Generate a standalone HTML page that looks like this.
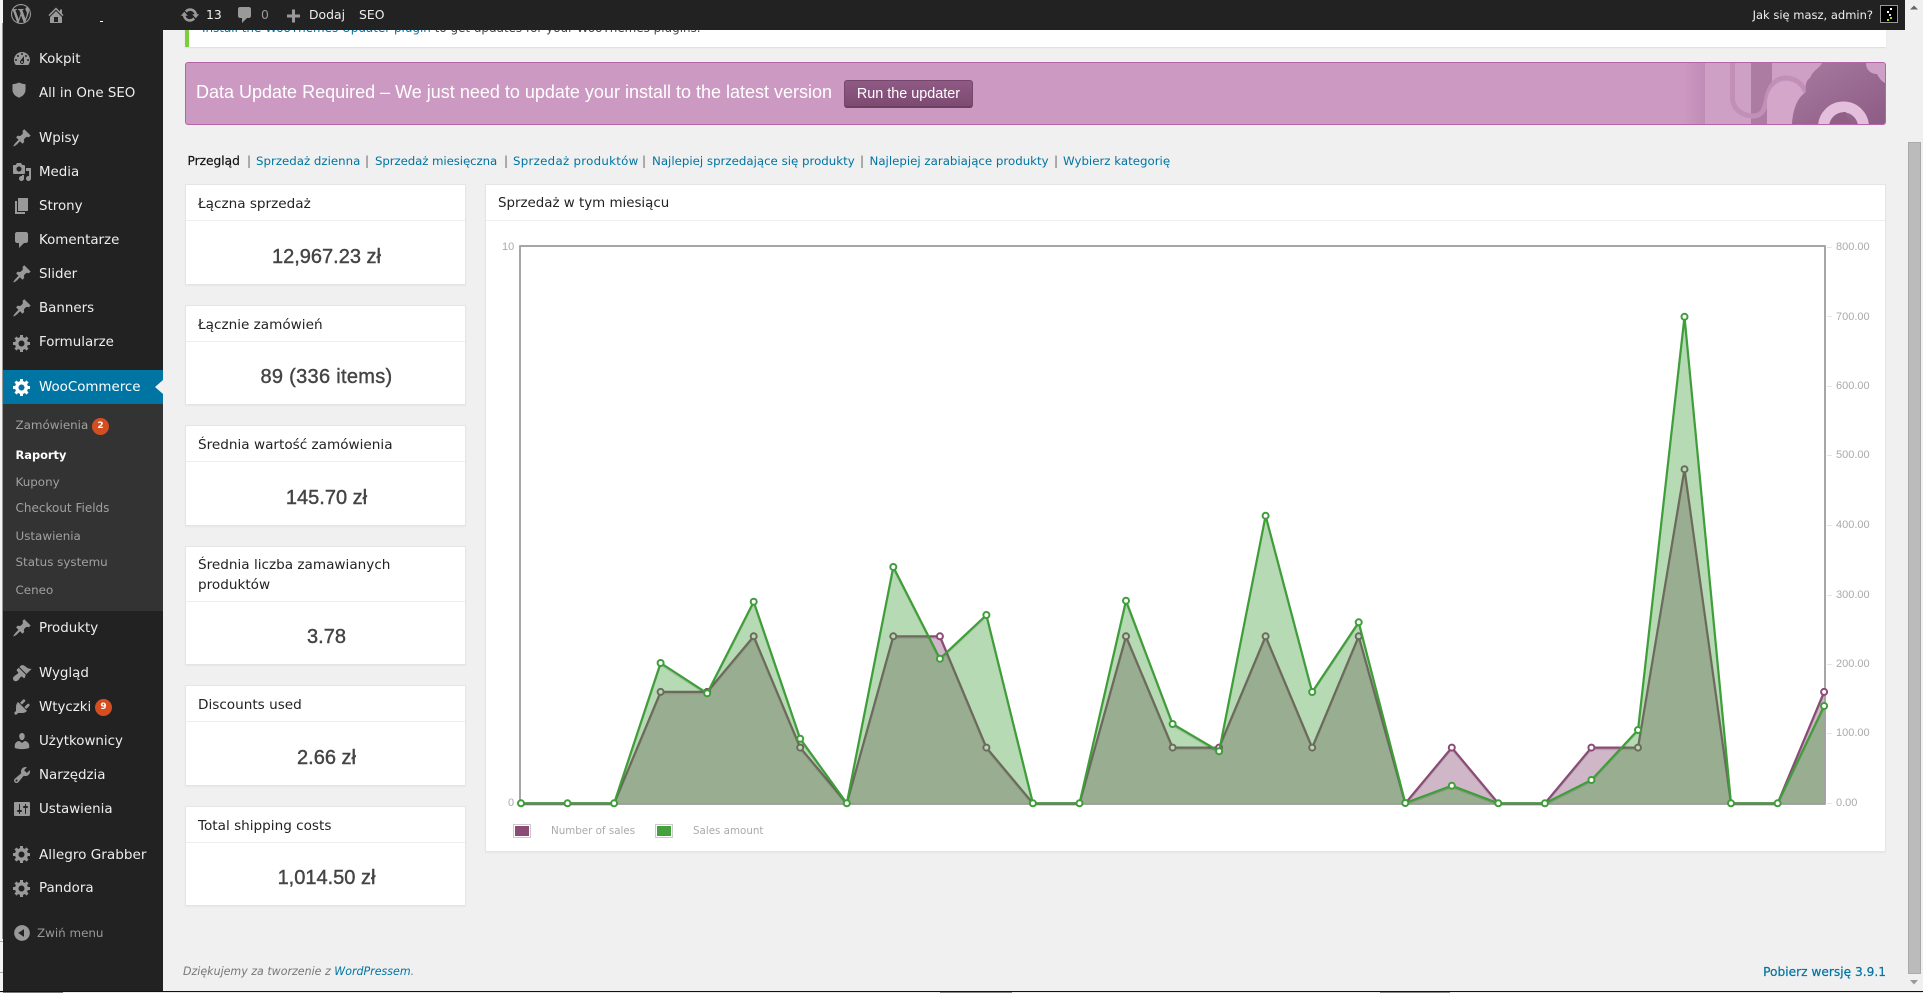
<!DOCTYPE html>
<html lang="pl"><head><meta charset="utf-8"><title>Raporty</title>
<style>
*{box-sizing:border-box}
html,body{margin:0;padding:0;width:1923px;height:993px;overflow:hidden;background:#f0f0f0;font-family:"DejaVu Sans","Liberation Sans",sans-serif}
.a{position:absolute;white-space:nowrap}
#left{left:0;top:0;width:3px;height:993px;background:#f4f4f4}
#leftl{left:2px;top:23px;width:1px;height:916px;background:#999}
#side{left:3px;top:30px;width:160px;height:961px;background:#222}
#sub{left:3px;top:404px;width:160px;height:207px;background:#333}
#cur{left:3px;top:370px;width:160px;height:34px;background:#0074a2}
#arrow{left:155px;top:380px;width:0;height:0;border-top:7px solid transparent;border-bottom:7px solid transparent;border-right:8px solid #f1f1f1}
#bar{left:3px;top:0;width:1902px;height:30px;background:#222}
.m{left:39px;line-height:20px;height:20px;font-size:13.4px;color:#eee}
.s{left:15.5px;line-height:18px;height:18px;font-size:11.9px;color:#a0a0a0}
.i{width:20px;height:20px;fill:#999;left:11.5px}
.b{width:17px;height:17px;border-radius:50%;background:#d54e21;color:#fff;font:bold 9px/17px "DejaVu Sans",sans-serif;text-align:center}
.t{line-height:20px;height:20px;font-size:12.4px;color:#eee}
.c{left:185px;width:281px;background:#fff;border:1px solid #e5e5e5;box-shadow:0 1px 1px rgba(0,0,0,.04)}
.l{left:186px;width:279px;height:1px;background:#eee}
.h{left:198px;line-height:20px;height:20px;font-size:13.6px;color:#222}
.v{left:187px;width:279px;text-align:center;line-height:28px;height:28px;font:20px/28px "Liberation Sans",sans-serif;color:#444;-webkit-text-stroke:.4px #444}
.n{top:152px;line-height:18px;height:18px;font-size:11.8px;color:#0074a2}
.sep{top:152px;line-height:18px;height:18px;font-size:12px;color:#666}
.r{font:11px/14px "Liberation Sans",sans-serif;color:#aaa}
.tk{left:1827px;width:5px;height:1px;background:#e6e6e6}
</style></head><body>
<div class="a" id="left"></div><div class="a" id="leftl"></div>
<div class="a" style="left:0;top:941px;width:3px;height:1px;background:#aaa"></div>
<div class="a" style="left:0;top:972px;width:3px;height:1px;background:#aaa"></div>

<!-- main notice -->
<div class="a" style="left:185px;top:20px;width:1701px;height:27px;background:#fff;border-left:4px solid #7ad03a;box-shadow:0 1px 1px rgba(0,0,0,.08)"></div>
<div class="a" style="left:202px;top:20px;line-height:17px;font-size:11.95px;color:#444"><span style="color:#0074a2">Install the WooThemes Updater plugin</span> to get updates for your WooThemes plugins.</div>

<!-- banner -->
<div class="a" style="left:185px;top:62px;width:1701px;height:63px;background:#cc99c2;border:1px solid #b763a8;border-radius:3px;overflow:hidden">
<svg class="a" style="left:0;top:0" width="1699" height="61" viewBox="186 63 1699 61">
<defs><linearGradient id="g1" x1="0" x2="1" y1="0" y2="0"><stop offset="0" stop-color="#cc99c2"/><stop offset="1" stop-color="#bf8cb5"/></linearGradient>
<linearGradient id="g2" x1="0" x2="1" y1="0" y2="1"><stop offset="0" stop-color="#a87aa1"/><stop offset="1" stop-color="#8d5c84"/></linearGradient></defs>
<rect x="1683" y="63" width="22" height="61" fill="url(#g1)"/>
<rect x="1705" y="63" width="180" height="61" fill="#cfa0c6"/>
<rect x="1751" y="63" width="21" height="61" fill="#ad7ca3"/>
<path d="M1732.500 63V98C1732.500 110 1744 116 1753 116C1763 116 1765 108 1767 98C1769 86 1776 78 1786 78C1796 78 1802 84 1806 92" fill="none" stroke="#c28fb8" stroke-width="5"/>
<path d="M1767 124V100C1769 88 1776 81 1786 81C1797 81 1802 88 1804 96V124Z" fill="#d3a6ca"/>
<path d="M1792 124C1793 108 1798 97 1806 92C1805 86 1806 80 1810 78C1813 70 1820 68 1822 63H1885V124Z" fill="url(#g2)"/>
<path d="M1866 63C1866 70 1871 74 1877 74C1880 80 1883 82 1885 83V63Z" fill="#cfa0c6"/>
<circle cx="1843.500" cy="127" r="20" fill="none" stroke="#e3bfdc" stroke-width="11"/>
<path d="M1830 124C1832 114 1840 112 1846 112C1845 116 1848 120 1852 124Z" fill="#8f5f86"/>
</svg>
</div>
<div class="a" style="left:196px;top:82px;font:18px/20px 'Liberation Sans',sans-serif;color:#fff">Data Update Required – We just need to update your install to the latest version</div>
<div class="a" style="left:844px;top:80px;width:129px;height:28px;border-radius:3px;background:linear-gradient(#8f5a85,#7d4a72);border:1px solid #76476c;border-bottom:2px solid #6a3f61;color:#fff;text-align:center;font:14.4px/26px 'Liberation Sans',sans-serif">Run the updater</div>

<!-- nav -->
<div class="a n" style="left:187.5px;color:#111;font-size:12.2px;-webkit-text-stroke:.2px #111">Przegląd</div>
<div class="a sep" style="left:247px">|</div><div class="a n" style="left:256px">Sprzedaż dzienna</div>
<div class="a sep" style="left:365px">|</div><div class="a n" style="left:375px;letter-spacing:-.1px">Sprzedaż miesięczna</div>
<div class="a sep" style="left:504px">|</div><div class="a n" style="left:513px;letter-spacing:.28px">Sprzedaż produktów</div>
<div class="a sep" style="left:642px">|</div><div class="a n" style="left:652px">Najlepiej sprzedające się produkty</div>
<div class="a sep" style="left:860px">|</div><div class="a n" style="left:869.500px">Najlepiej zarabiające produkty</div>
<div class="a sep" style="left:1054px">|</div><div class="a n" style="left:1063px">Wybierz kategorię</div>

<!-- cards -->
<div class="a c" style="top:184px;height:101px"></div><div class="a l" style="top:220px"></div>
<div class="a h" style="top:194px">Łączna sprzedaż</div><div class="a v" style="top:243px">12,967.23 zł</div>
<div class="a c" style="top:305px;height:100px"></div><div class="a l" style="top:341px"></div>
<div class="a h" style="top:315px">Łącznie zamówień</div><div class="a v" style="top:363px;letter-spacing:.3px">89 (336 items)</div>
<div class="a c" style="top:425px;height:101px"></div><div class="a l" style="top:461px"></div>
<div class="a h" style="top:435px">Średnia wartość zamówienia</div><div class="a v" style="top:484px">145.70 zł</div>
<div class="a c" style="top:546px;height:119px"></div><div class="a l" style="top:601px"></div>
<div class="a h" style="top:555px">Średnia liczba zamawianych</div><div class="a h" style="top:575px">produktów</div><div class="a v" style="top:623px">3.78</div>
<div class="a c" style="top:685px;height:101px"></div><div class="a l" style="top:721px"></div>
<div class="a h" style="top:695px">Discounts used</div><div class="a v" style="top:744px">2.66 zł</div>
<div class="a c" style="top:806px;height:100px"></div><div class="a l" style="top:842px"></div>
<div class="a h" style="top:816px">Total shipping costs</div><div class="a v" style="top:864px">1,014.50 zł</div>

<!-- chart card -->
<div class="a" style="left:485px;top:184px;width:1401px;height:668px;background:#fff;border:1px solid #e5e5e5;box-shadow:0 1px 1px rgba(0,0,0,.04)"></div>
<div class="a" style="left:486px;top:220px;width:1399px;height:1px;background:#eee"></div>
<div class="a h" style="left:498px;top:194px;font-size:13.4px">Sprzedaż w tym miesiącu</div>

<svg class="a" style="left:0;top:0" width="1923" height="993" viewBox="0 0 1923 993">
<g fill="none" stroke-linejoin="round">
<rect x="520" y="246" width="1305" height="558" stroke="#a6a6a6" stroke-width="2"/>
<!-- purple -->
<path fill="rgba(138,75,117,.4)" d="M521 803.300L567.500 803.300L614.100 803.300L660.600 691.900L707.200 691.900L753.700 636.300L800.200 747.600L846.800 803.300L893.300 636.300L939.900 636.300L986.400 747.600L1032.900 803.300L1079.500 803.300L1126 636.300L1172.600 747.600L1219.100 747.600L1265.600 636.300L1312.200 747.600L1358.700 636.300L1405.300 803.300L1451.800 747.600L1498.300 803.300L1544.900 803.300L1591.400 747.600L1638 747.600L1684.500 469.200L1731 803.300L1777.600 803.300L1824.100 691.900L1824.100 803.300Z"/>
<path stroke="rgba(0,0,0,.12)" stroke-width="2" transform="translate(0,1.500)" d="M521 803.300L567.500 803.300L614.100 803.300L660.600 691.900L707.200 691.900L753.700 636.300L800.200 747.600L846.800 803.300L893.300 636.300L939.900 636.300L986.400 747.600L1032.900 803.300L1079.500 803.300L1126 636.300L1172.600 747.600L1219.100 747.600L1265.600 636.300L1312.200 747.600L1358.700 636.300L1405.300 803.300L1451.800 747.600L1498.300 803.300L1544.900 803.300L1591.400 747.600L1638 747.600L1684.500 469.200L1731 803.300L1777.600 803.300L1824.100 691.900"/>
<path stroke="#8a4b75" stroke-width="2.200" d="M521 803.300L567.500 803.300L614.100 803.300L660.600 691.900L707.200 691.900L753.700 636.300L800.200 747.600L846.800 803.300L893.300 636.300L939.900 636.300L986.400 747.600L1032.900 803.300L1079.500 803.300L1126 636.300L1172.600 747.600L1219.100 747.600L1265.600 636.300L1312.200 747.600L1358.700 636.300L1405.300 803.300L1451.800 747.600L1498.300 803.300L1544.900 803.300L1591.400 747.600L1638 747.600L1684.500 469.200L1731 803.300L1777.600 803.300L1824.100 691.900"/>
<g stroke="#8a4b75" stroke-width="2" fill="#fff">
<circle cx="660.600" cy="691.900" r="3"/><circle cx="707.200" cy="691.900" r="3"/><circle cx="753.700" cy="636.300" r="3"/><circle cx="800.200" cy="747.600" r="3"/><circle cx="893.300" cy="636.300" r="3"/><circle cx="939.900" cy="636.300" r="3"/><circle cx="986.400" cy="747.600" r="3"/><circle cx="1126" cy="636.300" r="3"/><circle cx="1172.600" cy="747.600" r="3"/><circle cx="1219.100" cy="747.600" r="3"/><circle cx="1265.600" cy="636.300" r="3"/><circle cx="1312.200" cy="747.600" r="3"/><circle cx="1358.700" cy="636.300" r="3"/><circle cx="1451.800" cy="747.600" r="3"/><circle cx="1591.400" cy="747.600" r="3"/><circle cx="1638" cy="747.600" r="3"/><circle cx="1684.500" cy="469.200" r="3"/><circle cx="1824.100" cy="691.900" r="3"/>
</g>
<!-- green -->
<path fill="rgba(62,158,54,.38)" d="M521 803.300L567.500 803.300L614.100 803.300L660.600 663L707.200 693.300L753.700 601.700L800.200 738.700L846.800 803.300L893.300 567L939.900 658.700L986.400 615L1032.900 803.300L1079.500 803.300L1126 600.700L1172.600 724L1219.100 751.300L1265.600 515.700L1312.200 692L1358.700 622.300L1405.300 803L1451.800 785.700L1498.300 803.300L1544.900 803.300L1591.400 780L1638 730L1684.500 316.800L1731 803.300L1777.600 803.300L1824.100 706L1824.100 803.300Z"/>
<path stroke="rgba(0,0,0,.1)" stroke-width="2" transform="translate(0,1.500)" d="M521 803.300L567.500 803.300L614.100 803.300L660.600 663L707.200 693.300L753.700 601.700L800.200 738.700L846.800 803.300L893.300 567L939.900 658.700L986.400 615L1032.900 803.300L1079.500 803.300L1126 600.700L1172.600 724L1219.100 751.300L1265.600 515.700L1312.200 692L1358.700 622.300L1405.300 803L1451.800 785.700L1498.300 803.300L1544.900 803.300L1591.400 780L1638 730L1684.500 316.800L1731 803.300L1777.600 803.300L1824.100 706"/>
<path stroke="#3f9e3a" stroke-width="2.200" d="M521 803.300L567.500 803.300L614.100 803.300L660.600 663L707.200 693.300L753.700 601.700L800.200 738.700L846.800 803.300L893.300 567L939.900 658.700L986.400 615L1032.900 803.300L1079.500 803.300L1126 600.700L1172.600 724L1219.100 751.300L1265.600 515.700L1312.200 692L1358.700 622.300L1405.300 803L1451.800 785.700L1498.300 803.300L1544.900 803.300L1591.400 780L1638 730L1684.500 316.800L1731 803.300L1777.600 803.300L1824.100 706"/>
<g stroke="#3f9e3a" stroke-width="2" fill="#fff">
<circle cx="521" cy="803.300" r="3"/><circle cx="567.500" cy="803.300" r="3"/><circle cx="614.100" cy="803.300" r="3"/><circle cx="660.600" cy="663" r="3"/><circle cx="707.200" cy="693.300" r="3"/><circle cx="753.700" cy="601.700" r="3"/><circle cx="800.200" cy="738.700" r="3"/><circle cx="846.800" cy="803.300" r="3"/><circle cx="893.300" cy="567" r="3"/><circle cx="939.900" cy="658.700" r="3"/><circle cx="986.400" cy="615" r="3"/><circle cx="1032.900" cy="803.300" r="3"/><circle cx="1079.500" cy="803.300" r="3"/><circle cx="1126" cy="600.700" r="3"/><circle cx="1172.600" cy="724" r="3"/><circle cx="1219.100" cy="751.300" r="3"/><circle cx="1265.600" cy="515.700" r="3"/><circle cx="1312.200" cy="692" r="3"/><circle cx="1358.700" cy="622.300" r="3"/><circle cx="1405.300" cy="803" r="3"/><circle cx="1451.800" cy="785.700" r="3"/><circle cx="1498.300" cy="803.300" r="3"/><circle cx="1544.900" cy="803.300" r="3"/><circle cx="1591.400" cy="780" r="3"/><circle cx="1638" cy="730" r="3"/><circle cx="1684.500" cy="316.800" r="3"/><circle cx="1731" cy="803.300" r="3"/><circle cx="1777.600" cy="803.300" r="3"/><circle cx="1824.100" cy="706" r="3"/>
</g>
</g>
</svg>

<!-- axis labels -->
<div class="a r" style="left:502px;top:240px">10</div><div class="a r" style="left:508px;top:796px">0</div>
<div class="a tk" style="top:247px"></div><div class="a r" style="left:1836px;top:240px">800.00</div>
<div class="a tk" style="top:316px"></div><div class="a r" style="left:1836px;top:310px">700.00</div>
<div class="a tk" style="top:386px"></div><div class="a r" style="left:1836px;top:379px">600.00</div>
<div class="a tk" style="top:455px"></div><div class="a r" style="left:1836px;top:448px">500.00</div>
<div class="a tk" style="top:525px"></div><div class="a r" style="left:1836px;top:518px">400.00</div>
<div class="a tk" style="top:595px"></div><div class="a r" style="left:1836px;top:588px">300.00</div>
<div class="a tk" style="top:664px"></div><div class="a r" style="left:1836px;top:657px">200.00</div>
<div class="a tk" style="top:733px"></div><div class="a r" style="left:1836px;top:726px">100.00</div>
<div class="a tk" style="top:803px"></div><div class="a r" style="left:1836px;top:796px">0.00</div>

<!-- legend -->
<div class="a" style="left:513px;top:824px;width:18px;height:14px;border:1px solid #ccc;padding:1px"><div style="width:14px;height:10px;background:#8a4b75"></div></div>
<div class="a" style="left:551px;top:824px;line-height:14px;font-size:10.300px;color:#aaa">Number of sales</div>
<div class="a" style="left:655px;top:824px;width:18px;height:14px;border:1px solid #ccc;padding:1px"><div style="width:14px;height:10px;background:#44a03a"></div></div>
<div class="a" style="left:693px;top:824px;line-height:14px;font-size:10.300px;color:#aaa">Sales amount</div>

<!-- footer -->
<div class="a" style="left:183px;top:963px;line-height:18px;font-size:11.05px;font-style:italic;color:#777">Dziękujemy za tworzenie z <span style="color:#0074a2">WordPressem</span>.</div>
<div class="a" style="right:37px;top:963px;line-height:18px;font-size:12.2px;color:#0074a2;-webkit-text-stroke:.2px #0074a2">Pobierz wersję 3.9.1</div>

<!-- scrollbar -->
<svg class="a" style="left:1905px;top:0" width="18" height="993" viewBox="0 0 18 993">
<path d="M5 9.500L9 5.500L13 9.500Z" fill="#666"/>
<rect x="3.500" y="142.500" width="12" height="831" fill="#bbb" stroke="#aaa"/>
<path d="M5 980L9 984.500L13 980Z" fill="#999"/>
</svg>

<!-- sidebar -->
<div class="a" id="side"></div><div class="a" id="sub"></div><div class="a" id="cur"></div><div class="a" id="arrow"></div>
<div class="a" id="bar"></div>

<!-- bottom edge -->
<div class="a" style="left:0;top:991px;width:1923px;height:1px;background:#111"></div>
<div class="a" style="left:0;top:992px;width:1923px;height:1px;background:#e8e8e8"></div>
<div class="a" style="left:3px;top:992px;width:60px;height:1px;background:#777"></div>
<div class="a" style="left:940px;top:992px;width:72px;height:1px;background:#888"></div>
<div class="a" style="left:1380px;top:992px;width:70px;height:1px;background:#888"></div>

<!-- menu icons -->
<svg class="a i" style="top:49px" viewBox="0 0 20 20"><path d="M3.760 16h12.480c1.100-1.370 1.760-3.110 1.760-5 0-4.420-3.580-8-8-8s-8 3.580-8 8c0 1.890.66 3.630 1.760 5zM10 4c.55 0 1 .45 1 1s-.45 1-1 1-1-.45-1-1 .45-1 1-1zM6 6c.55 0 1 .45 1 1s-.45 1-1 1-1-.45-1-1 .45-1 1-1zm8 0c.55 0 1 .45 1 1s-.45 1-1 1-1-.45-1-1 .45-1 1-1zm-5.370 5.550L12 7v6c0 1.100-.9 2-2 2s-2-.9-2-2c0-.57.24-1.080.63-1.450zM4 10c.55 0 1 .45 1 1s-.45 1-1 1-1-.45-1-1 .45-1 1-1zm12 0c.55 0 1 .45 1 1s-.45 1-1 1-1-.45-1-1 .45-1 1-1zm-5 3c0-.55-.45-1-1-1s-1 .45-1 1 .45 1 1 1 1-.45 1-1z"/></svg>
<svg class="a i" style="top:80px;left:9px" viewBox="0 0 20 20"><path d="M10 2.500C7.500 3.700 5.500 4 3.500 4.200V10c0 3.800 3.200 6.500 6.500 7.700 3.300-1.200 6.500-3.900 6.500-7.700V4.200C14.500 4 12.500 3.700 10 2.500z"/></svg>
<svg class="a i" style="top:128px" viewBox="0 0 20 20"><path d="M10.440 3.020l1.820-1.820 6.360 6.350-1.830 1.820c-1.050-.68-2.480-.57-3.410.36l-.75.75c-.92.93-1.040 2.350-.35 3.410l-1.830 1.820-2.410-2.410-2.800 2.790c-.42.42-3.380 2.710-3.800 2.290s1.860-3.390 2.280-3.810l2.790-2.790L4.100 9.360l1.830-1.820c1.050.69 2.480.57 3.400-.36l.75-.75c.93-.92 1.050-2.350.36-3.410z"/></svg>
<svg class="a i" style="top:162px" viewBox="0 0 20 20"><path d="M13 11V4c0-.55-.45-1-1-1h-1.670L9 1H5L3.670 3H2c-.55 0-1 .45-1 1v7c0 .55.45 1 1 1h10c.55 0 1-.45 1-1zM7 4.500c1.380 0 2.500 1.120 2.500 2.500S8.380 9.500 7 9.500 4.500 8.380 4.500 7 5.620 4.500 7 4.500zM14 6h5v10.500c0 1.380-1.120 2.500-2.500 2.500S14 17.880 14 16.500s1.120-2.500 2.500-2.500c.17 0 .34.02.5.05V9h-3V6zm-4 8.050V13h2v3.500c0 1.380-1.120 2.500-2.500 2.500S7 17.880 7 16.500 8.120 14 9.500 14c.17 0 .34.02.5.05z"/></svg>
<svg class="a i" style="top:196px" viewBox="0 0 20 20"><path d="M6 15V2h10v13H6zm-1 1h8v2H3V5h2v11z"/></svg>
<svg class="a i" style="top:230px" viewBox="0 0 20 20"><path d="M5 2h9c1.100 0 2 .9 2 2v7c0 1.100-.9 2-2 2h-2l-5 5v-5H5c-1.100 0-2-.9-2-2V4c0-1.100.9-2 2-2z"/></svg>
<svg class="a i" style="top:264px" viewBox="0 0 20 20"><path d="M10.440 3.020l1.820-1.820 6.360 6.350-1.830 1.820c-1.050-.68-2.480-.57-3.410.36l-.75.75c-.92.93-1.040 2.350-.35 3.410l-1.830 1.820-2.410-2.410-2.800 2.790c-.42.42-3.380 2.710-3.800 2.290s1.860-3.390 2.280-3.810l2.790-2.790L4.100 9.360l1.830-1.820c1.050.69 2.480.57 3.400-.36l.75-.75c.93-.92 1.050-2.350.36-3.410z"/></svg>
<svg class="a i" style="top:298px" viewBox="0 0 20 20"><path d="M10.440 3.020l1.820-1.820 6.360 6.350-1.830 1.820c-1.050-.68-2.480-.57-3.410.36l-.75.75c-.92.93-1.040 2.350-.35 3.410l-1.830 1.820-2.410-2.410-2.800 2.790c-.42.42-3.380 2.710-3.800 2.290s1.860-3.390 2.280-3.810l2.790-2.790L4.100 9.360l1.830-1.820c1.050.69 2.480.57 3.400-.36l.75-.75c.93-.92 1.050-2.350.36-3.410z"/></svg>
<svg class="a i" style="top:333px" viewBox="0 0 20 20"><path d="M18 12h-2.180c-.17.7-.44 1.350-.81 1.930l1.540 1.540-2.100 2.100-1.540-1.540c-.58.36-1.230.63-1.910.79V19H8v-2.180c-.68-.16-1.330-.43-1.910-.79l-1.540 1.540-2.120-2.120 1.540-1.540c-.36-.58-.63-1.230-.79-1.910H1V9.030h2.170c.16-.7.44-1.350.8-1.940L2.430 5.550l2.100-2.100 1.540 1.540c.58-.37 1.240-.64 1.930-.81V2h3v2.180c.68.16 1.330.43 1.910.79l1.540-1.540 2.120 2.120-1.540 1.540c.36.59.64 1.240.8 1.940H18V12zm-8.500 1.500c1.660 0 3-1.340 3-3s-1.340-3-3-3-3 1.340-3 3 1.340 3 3 3z"/></svg>
<svg class="a i" style="top:377px;fill:#fff" viewBox="0 0 20 20"><path d="M18 12h-2.180c-.17.7-.44 1.350-.81 1.930l1.540 1.540-2.100 2.100-1.540-1.540c-.58.36-1.230.63-1.910.79V19H8v-2.180c-.68-.16-1.330-.43-1.910-.79l-1.540 1.540-2.120-2.120 1.540-1.540c-.36-.58-.63-1.230-.79-1.910H1V9.030h2.170c.16-.7.44-1.350.8-1.940L2.430 5.550l2.100-2.100 1.540 1.540c.58-.37 1.240-.64 1.930-.81V2h3v2.180c.68.16 1.330.43 1.910.79l1.540-1.540 2.120 2.120-1.540 1.540c.36.59.64 1.240.8 1.940H18V12zm-8.500 1.500c1.660 0 3-1.340 3-3s-1.340-3-3-3-3 1.340-3 3 1.340 3 3 3z"/></svg>
<svg class="a i" style="top:618px" viewBox="0 0 20 20"><path d="M10.440 3.020l1.820-1.820 6.360 6.350-1.830 1.820c-1.050-.68-2.480-.57-3.410.36l-.75.75c-.92.93-1.040 2.350-.35 3.410l-1.830 1.820-2.410-2.410-2.800 2.790c-.42.42-3.380 2.710-3.800 2.290s1.860-3.390 2.280-3.810l2.790-2.790L4.100 9.360l1.830-1.820c1.050.69 2.480.57 3.400-.36l.75-.75c.93-.92 1.050-2.350.36-3.410z"/></svg>
<svg class="a i" style="top:663px" viewBox="0 0 20 20"><path d="M14.480 11.060L7.410 3.990l1.500-1.500c.5-.56 2.300-.47 3.510.32 1.210.8 1.430 1.280 2.910 2.100 1.180.64 2.450 1.260 4.450.85zm-.71.71L6.700 4.700 4.930 6.470c-.39.39-.39 1.020 0 1.410l1.060 1.060c.39.39.39 1.030 0 1.420-.6.6-1.430 1.110-2.210 1.690-.35.26-.7.530-1.010.84C1.430 13.710 1 14.620 1 15.500c0 .3.06.6.15.89.12.38.33.75.66 1.080.32.33.69.54 1.070.66.29.09.59.15.89.15.88 0 1.790-.43 2.610-1.250.31-.31.58-.66.84-1.010.58-.78 1.090-1.610 1.690-2.210.39-.39 1.030-.39 1.420 0l1.060 1.060c.39.39 1.020.39 1.410 0z"/></svg>
<svg class="a i" style="top:697px" viewBox="0 0 20 20"><path d="M13.110 4.360L9.870 7.600 8 5.730l3.240-3.240c.35-.34 1.050-.2 1.560.32.52.51.66 1.210.31 1.550zm-8 1.770l.91-1.120 9.010 9.010-1.190.84c-.71.71-2.630 1.160-3.820 1.160H6.140L4.900 17.260c-.59.59-1.540.59-2.120 0-.59-.58-.59-1.530 0-2.120l1.240-1.240v-3.880c0-1.130.4-3.190 1.090-3.890zm7.260 3.970l3.240-3.240c.34-.35 1.040-.21 1.550.31.52.51.66 1.210.31 1.550l-3.240 3.250z"/></svg>
<svg class="a i" style="top:731px" viewBox="0 0 20 20"><path d="M10 9.250c-2.270 0-2.730-3.440-2.730-3.440C7 4.020 7.820 2 9.970 2c2.160 0 2.980 2.020 2.710 3.810 0 0-.41 3.440-2.680 3.440zm0 2.570L12.720 10c2.390 0 4.520 2.330 4.520 4.530v2.490s-3.650 1.130-7.240 1.130c-3.650 0-7.240-1.130-7.240-1.130v-2.490c0-2.250 1.940-4.480 4.470-4.480z"/></svg>
<svg class="a i" style="top:765px" viewBox="0 0 20 20"><path d="M16.680 9.770c-1.340 1.340-3.300 1.670-4.950.99l-5.410 6.520c-.99.99-2.590.99-3.580 0s-.99-2.590 0-3.570l6.520-5.420c-.68-1.650-.35-3.610.99-4.950 1.280-1.280 3.120-1.620 4.720-1.060l-2.890 2.890 2.820 2.820 2.860-2.870c.53 1.580.18 3.390-1.080 4.650zM3.810 16.210c.4.39 1.040.39 1.430 0 .4-.4.4-1.040 0-1.430-.39-.4-1.030-.4-1.430 0-.39.39-.39 1.030 0 1.430z"/></svg>
<svg class="a i" style="top:799px" viewBox="0 0 20 20"><path d="M18 16V4c0-.55-.45-1-1-1H3c-.55 0-1 .45-1 1v12c0 .55.45 1 1 1h14c.55 0 1-.45 1-1zM8 11h1c.55 0 1 .45 1 1s-.45 1-1 1H8v1.500c0 .28-.22.5-.5.5s-.5-.22-.5-.5V13H6c-.55 0-1-.45-1-1s.45-1 1-1h1V5.500c0-.28.22-.5.5-.5s.5.22.5.5V11zm5-2h-1c-.55 0-1-.45-1-1s.45-1 1-1h1V5.500c0-.28.22-.5.5-.5s.5.22.5.5V7h1c.55 0 1 .45 1 1s-.45 1-1 1h-1v5.500c0 .28-.22.5-.5.5s-.5-.22-.5-.5V9z"/></svg>
<svg class="a i" style="top:844px" viewBox="0 0 20 20"><path d="M18 12h-2.180c-.17.7-.44 1.350-.81 1.930l1.540 1.540-2.100 2.100-1.540-1.540c-.58.36-1.230.63-1.910.79V19H8v-2.180c-.68-.16-1.330-.43-1.910-.79l-1.540 1.540-2.120-2.120 1.540-1.540c-.36-.58-.63-1.230-.79-1.910H1V9.030h2.170c.16-.7.44-1.350.8-1.940L2.430 5.550l2.100-2.100 1.540 1.540c.58-.37 1.240-.64 1.930-.81V2h3v2.180c.68.16 1.330.43 1.910.79l1.540-1.540 2.120 2.120-1.540 1.540c.36.59.64 1.240.8 1.940H18V12zm-8.500 1.500c1.660 0 3-1.340 3-3s-1.340-3-3-3-3 1.340-3 3 1.340 3 3 3z"/></svg>
<svg class="a i" style="top:878px" viewBox="0 0 20 20"><path d="M18 12h-2.180c-.17.7-.44 1.350-.81 1.930l1.540 1.540-2.100 2.100-1.540-1.540c-.58.36-1.230.63-1.910.79V19H8v-2.180c-.68-.16-1.330-.43-1.910-.79l-1.540 1.540-2.120-2.120 1.540-1.540c-.36-.58-.63-1.230-.79-1.910H1V9.030h2.170c.16-.7.44-1.350.8-1.940L2.430 5.550l2.100-2.100 1.540 1.540c.58-.37 1.240-.64 1.930-.81V2h3v2.180c.68.16 1.330.43 1.910.79l1.540-1.540 2.120 2.120-1.540 1.540c.36.59.64 1.240.8 1.940H18V12zm-8.500 1.500c1.660 0 3-1.340 3-3s-1.340-3-3-3-3 1.340-3 3 1.340 3 3 3z"/></svg>
<svg class="a i" style="top:923px" viewBox="0 0 20 20"><path d="M10 2.160c4.330 0 7.840 3.510 7.840 7.840s-3.510 7.840-7.840 7.840S2.160 14.330 2.160 10 5.710 2.160 10 2.160zm2 11.720V6.120L6.180 9.970z"/></svg>

<!-- menu text -->
<div class="a m" style="top:50px">Kokpit</div>
<div class="a m" style="top:84px">All in One SEO</div>
<div class="a m" style="top:129px">Wpisy</div>
<div class="a m" style="top:163px">Media</div>
<div class="a m" style="top:197px">Strony</div>
<div class="a m" style="top:231px">Komentarze</div>
<div class="a m" style="top:265px">Slider</div>
<div class="a m" style="top:299px">Banners</div>
<div class="a m" style="top:333px">Formularze</div>
<div class="a m" style="top:378px;color:#fff">WooCommerce</div>
<div class="a s" style="top:416px">Zamówienia</div><div class="a b" style="left:92px;top:418px">2</div>
<div class="a s" style="top:446px;color:#fff;font-weight:bold;font-size:11.400px">Raporty</div>
<div class="a s" style="top:473px">Kupony</div>
<div class="a s" style="top:499px;font-size:12px">Checkout Fields</div>
<div class="a s" style="top:527px">Ustawienia</div>
<div class="a s" style="top:553px">Status systemu</div>
<div class="a s" style="top:581px">Ceneo</div>
<div class="a m" style="top:619px">Produkty</div>
<div class="a m" style="top:664px">Wygląd</div>
<div class="a m" style="top:698px">Wtyczki</div><div class="a b" style="left:95px;top:699px">9</div>
<div class="a m" style="top:732px">Użytkownicy</div>
<div class="a m" style="top:766px">Narzędzia</div>
<div class="a m" style="top:800px">Ustawienia</div>
<div class="a m" style="top:845px;font-size:13.6px">Allegro Grabber</div>
<div class="a m" style="top:879px">Pandora</div>
<div class="a" style="left:37px;top:923px;line-height:20px;font-size:11.900px;color:#999">Zwiń menu</div>

<!-- admin bar -->
<svg class="a" style="left:11px;top:4px;fill:#999" width="20" height="20" viewBox="0 0 20 20"><path d="M20 10c0-5.510-4.490-10-10-10C4.480 0 0 4.490 0 10c0 5.520 4.480 10 10 10 5.510 0 10-4.480 10-10zM7.780 15.370L4.370 6.220c.55-.02 1.170-.08 1.170-.08.5-.06.44-1.130-.06-1.110 0 0-1.450.11-2.370.11-.18 0-.37 0-.58-.01C4.120 2.690 6.870 1.110 10 1.110c2.330 0 4.450.87 6.050 2.340-.68-.11-1.650.39-1.650 1.580 0 .74.45 1.360.9 2.100.35.61.55 1.360.55 2.460 0 1.490-1.400 5-1.400 5l-3.030-8.370c.54-.02.82-.17.82-.17.5-.05.44-1.250-.06-1.220 0 0-1.440.12-2.380.12-.87 0-2.330-.12-2.330-.12-.5-.03-.56 1.200-.06 1.220l.92.08 1.260 3.410zM17.410 10c.24-.64.74-1.870.43-4.250.7 1.290 1.050 2.710 1.050 4.250 0 3.290-1.730 6.240-4.400 7.780.97-2.590 1.940-5.200 2.920-7.780zM6.100 18.090C3.120 16.650 1.110 13.530 1.110 10c0-1.300.23-2.480.72-3.590C3.250 10.300 4.670 14.200 6.100 18.090zm4.030-6.630l2.580 6.980c-.86.29-1.760.45-2.710.45-.79 0-1.570-.11-2.290-.33.81-2.380 1.620-4.740 2.420-7.100z"/></svg>
<svg class="a" style="left:46px;top:5px;fill:#999" width="20" height="20" viewBox="0 0 20 20"><path d="M16 8.500l1.530 1.530-1.060 1.060L10 4.620l-6.470 6.470-1.060-1.060L10 2.500l4 4v-2h2v4zm-6-2.460l6 5.990V18H4v-5.970zM12 17v-5H8v5h4z"/></svg>
<div class="a" style="left:100px;top:21px;width:3px;height:1px;background:#fff"></div>
<svg class="a" style="left:180px;top:5px;fill:#999" width="20" height="20" viewBox="0 0 20 20"><path d="M10.200 3.280c3.530 0 6.430 2.610 6.920 6h2.080l-3.500 4-3.500-4h2.320c-.45-1.970-2.210-3.450-4.320-3.450-1.450 0-2.730.71-3.540 1.780L4.950 5.660C6.230 4.200 8.110 3.280 10.200 3.280zm-.4 13.440c-3.520 0-6.430-2.610-6.920-6H.8l3.500-4c1.170 1.330 2.330 2.670 3.500 4H5.480c.45 1.970 2.210 3.450 4.320 3.450 1.450 0 2.730-.71 3.540-1.780l1.710 1.950c-1.280 1.460-3.150 2.380-5.250 2.380z"/></svg>
<div class="a t" style="left:206px;top:5px">13</div>
<svg class="a" style="left:235px;top:5px;fill:#999" width="20" height="20" viewBox="0 0 20 20"><path d="M5 2h9c1.100 0 2 .9 2 2v7c0 1.100-.9 2-2 2h-2l-5 5v-5H5c-1.100 0-2-.9-2-2V4c0-1.100.9-2 2-2z"/></svg>
<div class="a t" style="left:261px;top:5px;color:#999">0</div>
<svg class="a" style="left:283px;top:5.500px;fill:#999" width="20" height="20" viewBox="0 0 20 20"><path d="M17 7v3h-5v5H9v-5H4V7h5V2h3v5h5z" transform="translate(0,1.500)"/></svg>
<div class="a t" style="left:309px;top:5px">Dodaj</div>
<div class="a t" style="left:359px;top:5px">SEO</div>
<div class="a t" style="right:50px;top:5px;font-size:11.5px">Jak się masz, admin?</div>
<svg class="a" style="left:1880px;top:5px" width="18" height="18" viewBox="0 0 18 18"><rect x=".5" y=".5" width="17" height="17" fill="#000" stroke="#999"/><rect x="10" y="3" width="2" height="2" fill="#fff"/><rect x="7" y="6" width="2" height="2" fill="#fff"/><rect x="9" y="9" width="2" height="2" fill="#ddd"/><rect x="10" y="12" width="2" height="2" fill="#bd0"/><rect x="7" y="14" width="2" height="2" fill="#bd0"/></svg>
</body></html>
